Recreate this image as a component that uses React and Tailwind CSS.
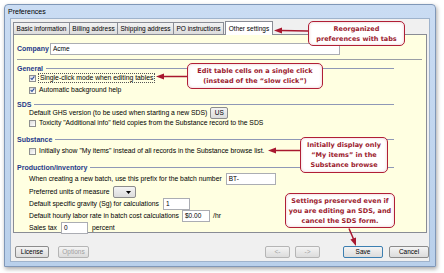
const ui = { fontFamily: '"Liberation Sans", Arial, sans-serif' };
const callFont = { fontFamily: '"DejaVu Sans", Verdana, sans-serif' };

function Check({ checked }) {
  return (
    <span className="w-[7px] h-[7px] border border-[#8e8f8f] bg-gradient-to-br from-[#dcdcdc] to-[#ffffff] flex items-center justify-center shrink-0">
      {checked && (
        <svg width="6" height="6" viewBox="0 0 6 6">
          <path d="M0.8 3.2 L2.4 4.8 L5.2 1" fill="none" stroke="#2a4c9c" strokeWidth="1.3" />
        </svg>
      )}
    </span>
  );
}

function Heading({ children }) {
  return (
    <div className="h-[8px] flex items-center gap-[3px] mr-[28px]">
      <span className="text-[7px] font-bold text-[#1f3a8a] leading-none">{children}</span>
      <span className="flex-1 h-px bg-[#8f98b6]" />
    </div>
  );
}

function Field({ w, children }) {
  return (
    <span className={`${w} h-[12px] border border-[#abadb3] bg-white px-[2px] text-[6.5px] leading-[10px] text-black shrink-0`}>
      {children}
    </span>
  );
}

function Btn({ w, children, disabled, primary }) {
  return (
    <button
      className={`${w} h-[12px] rounded-[2px] border ${primary ? 'border-[#3c7fb1]' : 'border-[#8c8c8c]'} ${disabled ? 'border-[#b5b5b5] text-[#a0a0a0]' : 'text-black'} bg-gradient-to-b from-[#f4f4f4] to-[#dcdcdc] text-[6.5px] leading-none flex items-center justify-center shrink-0`}
    >
      {children}
    </button>
  );
}

function Tab({ w, children, active }) {
  return active ? (
    <div className={`${w} h-[14px] bg-white border border-b-0 border-[#898c95] text-[6.5px] flex items-center justify-center relative z-10 -mb-px ml-[1px]`}>
      {children}
    </div>
  ) : (
    <div className={`${w} h-[12px] bg-gradient-to-b from-[#f2f2f2] to-[#dcdcdc] border border-b-0 border-l-0 first:border-l border-[#898c95] text-[6.5px] flex items-center justify-center`}>
      {children}
    </div>
  );
}

function Callout({ className, children }) {
  return (
    <div
      className={`absolute ${className} border-[1.5px] border-[#b01f36] rounded-[5px] bg-white shadow-[inset_0_0_3px_rgba(176,31,54,0.25)] flex flex-col items-center justify-center text-[6.5px] font-bold text-[#9b1a2e] leading-[10px] text-center whitespace-nowrap`}
      style={callFont}
    >
      {children}
    </div>
  );
}

export default function App() {
  return (
    <div className="relative w-[444px] h-[273px] bg-white overflow-hidden" style={ui}>
      <div className="ml-[4px] mt-[4px] w-[432px] h-[263px] rounded-t-[4px] border border-[#7f97b8] bg-gradient-to-b from-[#cadcf3] to-[#b9d0eb] flex flex-col shadow-[1px_2px_4px_rgba(0,0,0,0.35)]">
        <div className="h-[13px] pl-[3px] text-[7px] leading-[14px] text-black">Preferences</div>
        <div className="mx-[5px] mb-[4px] flex-1 bg-[#f0f0f0] border border-[#9fb3cc] flex flex-col">
          <div className="pl-[2px] pr-[2px] pt-[1px]">
            <div className="flex items-end h-[14px]">
              <Tab w="w-[57px]">Basic information</Tab>
              <Tab w="w-[48px]">Billing address</Tab>
              <Tab w="w-[56px]">Shipping address</Tab>
              <Tab w="w-[50px]">PO instructions</Tab>
              <Tab w="w-[48px]" active>Other settings</Tab>
            </div>
            <div className="h-[199px] border border-[#898c95] bg-[#ffffe1] pl-[3px] pr-[4px] pt-[8px] text-[6.8px] text-black">
              <div className="h-[12px] flex items-center">
                <span className="w-[33px] text-[7px] font-bold text-[#1f3a8a]">Company</span>
                <Field w="w-[290px]">Acme</Field>
              </div>
              <div className="mt-[4px] h-px bg-[#9a9ea6]" />
              <div className="mt-[4px]">
                <Heading>General</Heading>
              </div>
              <div className="h-[12px] flex items-center gap-[2px] pl-[12px]">
                <Check checked />
                <span className="border border-dotted border-[#555] px-[1px] leading-[8px]">Single-click mode when editing tables</span>
              </div>
              <div className="h-[12px] flex items-center gap-[3px] pl-[12px]">
                <Check checked />
                <span>Automatic background help</span>
              </div>
              <div className="mt-[4px]">
                <Heading>SDS</Heading>
              </div>
              <div className="h-[10px] flex items-center gap-[3px] pl-[12px]">
                <span>Default GHS version (to be used when starting a new SDS)</span>
                <Btn w="w-[18px]">US</Btn>
              </div>
              <div className="h-[11px] flex items-center gap-[3px] pl-[12px]">
                <Check />
                <span>Toxicity "Additional info" field copies from the Substance record to the SDS</span>
              </div>
              <div className="mt-[6px]">
                <Heading>Substance</Heading>
              </div>
              <div className="mt-[2px] h-[12px] flex items-center gap-[3px] pl-[12px]">
                <Check />
                <span>Initially show "My items" instead of all records in the Substance browse list.</span>
              </div>
              <div className="mt-[6px]">
                <Heading>Production/inventory</Heading>
              </div>
              <div className="mt-[2px] h-[12px] flex items-center gap-[4px] pl-[12px]">
                <span>When creating a new batch, use this prefix for the batch number</span>
                <Field w="w-[50px]">BT-</Field>
              </div>
              <div className="mt-[1px] h-[12px] flex items-center gap-[4px] pl-[12px]">
                <span>Preferred units of measure</span>
                <span className="w-[23px] h-[12px] rounded-[2px] border border-[#8c8c8c] bg-gradient-to-b from-[#f4f4f4] to-[#dcdcdc] flex items-center justify-end pr-[4px]">
                  <svg width="5" height="3" viewBox="0 0 5 3"><path d="M0 0 H5 L2.5 3 Z" fill="#000" /></svg>
                </span>
              </div>
              <div className="h-[12px] flex items-center gap-[4px] pl-[12px]">
                <span>Default specific gravity (Sg) for calculations</span>
                <Field w="w-[27px]">1</Field>
              </div>
              <div className="h-[12px] flex items-center gap-[3px] pl-[12px]">
                <span>Default hourly labor rate in batch cost calculations</span>
                <Field w="w-[28px]">$0.00</Field>
                <span>/hr</span>
              </div>
              <div className="h-[12px] flex items-center gap-[4px] pl-[12px]">
                <span>Sales tax</span>
                <Field w="w-[27px]">0</Field>
                <span>percent</span>
              </div>
            </div>
          </div>
          <div className="mt-[13px] flex items-center pl-[4px]">
            <Btn w="w-[34px]">License</Btn>
            <div className="ml-[9px]"><Btn w="w-[31px]" disabled>Options</Btn></div>
            <div className="ml-[176px]"><Btn w="w-[25px]" disabled>&lt;-</Btn></div>
            <div className="ml-[5px]"><Btn w="w-[25px]" disabled>-&gt;</Btn></div>
            <div className="ml-[23px]"><Btn w="w-[40px]" primary>Save</Btn></div>
            <div className="ml-[6px]"><Btn w="w-[40px]">Cancel</Btn></div>
          </div>
        </div>
      </div>

      <Callout className="left-[308px] top-[21px] w-[97px] h-[25px]">
        <span>Reorganized</span>
        <span>preferences with tabs</span>
      </Callout>
      <Callout className="left-[187px] top-[63px] w-[136px] h-[26px]">
        <span>Edit table cells on a single click</span>
        <span>(instead of the “slow click”)</span>
      </Callout>
      <Callout className="left-[300px] top-[137px] w-[88px] h-[36px]">
        <span>Initially display only</span>
        <span>“My items” in the</span>
        <span>Substance browse</span>
      </Callout>
      <Callout className="left-[285px] top-[193px] w-[110px] h-[35px]">
        <span>Settings preserved even if</span>
        <span>you are editing an SDS, and</span>
        <span>cancel the SDS form.</span>
      </Callout>

      <svg className="absolute left-0 top-0 pointer-events-none" width="444" height="273" viewBox="0 0 444 273">
        <g stroke="#a8182f" strokeWidth="1.5" fill="#a8182f">
          <line x1="308" y1="31" x2="281" y2="30.5" />
          <path d="M274 30.5 L282 27.5 L282 33.5 Z" stroke="none" />
          <line x1="187" y1="76.5" x2="163" y2="76.5" />
          <path d="M156 76.5 L164 73.5 L164 79.5 Z" stroke="none" />
          <line x1="300" y1="150.5" x2="275" y2="150.5" />
          <path d="M268 150.5 L276 147.5 L276 153.5 Z" stroke="none" />
          <line x1="349" y1="228.5" x2="353.5" y2="239" />
          <path d="M356 246 L356 237.4 L350.4 239.6 Z" stroke="none" />
        </g>
      </svg>
    </div>
  );
}
